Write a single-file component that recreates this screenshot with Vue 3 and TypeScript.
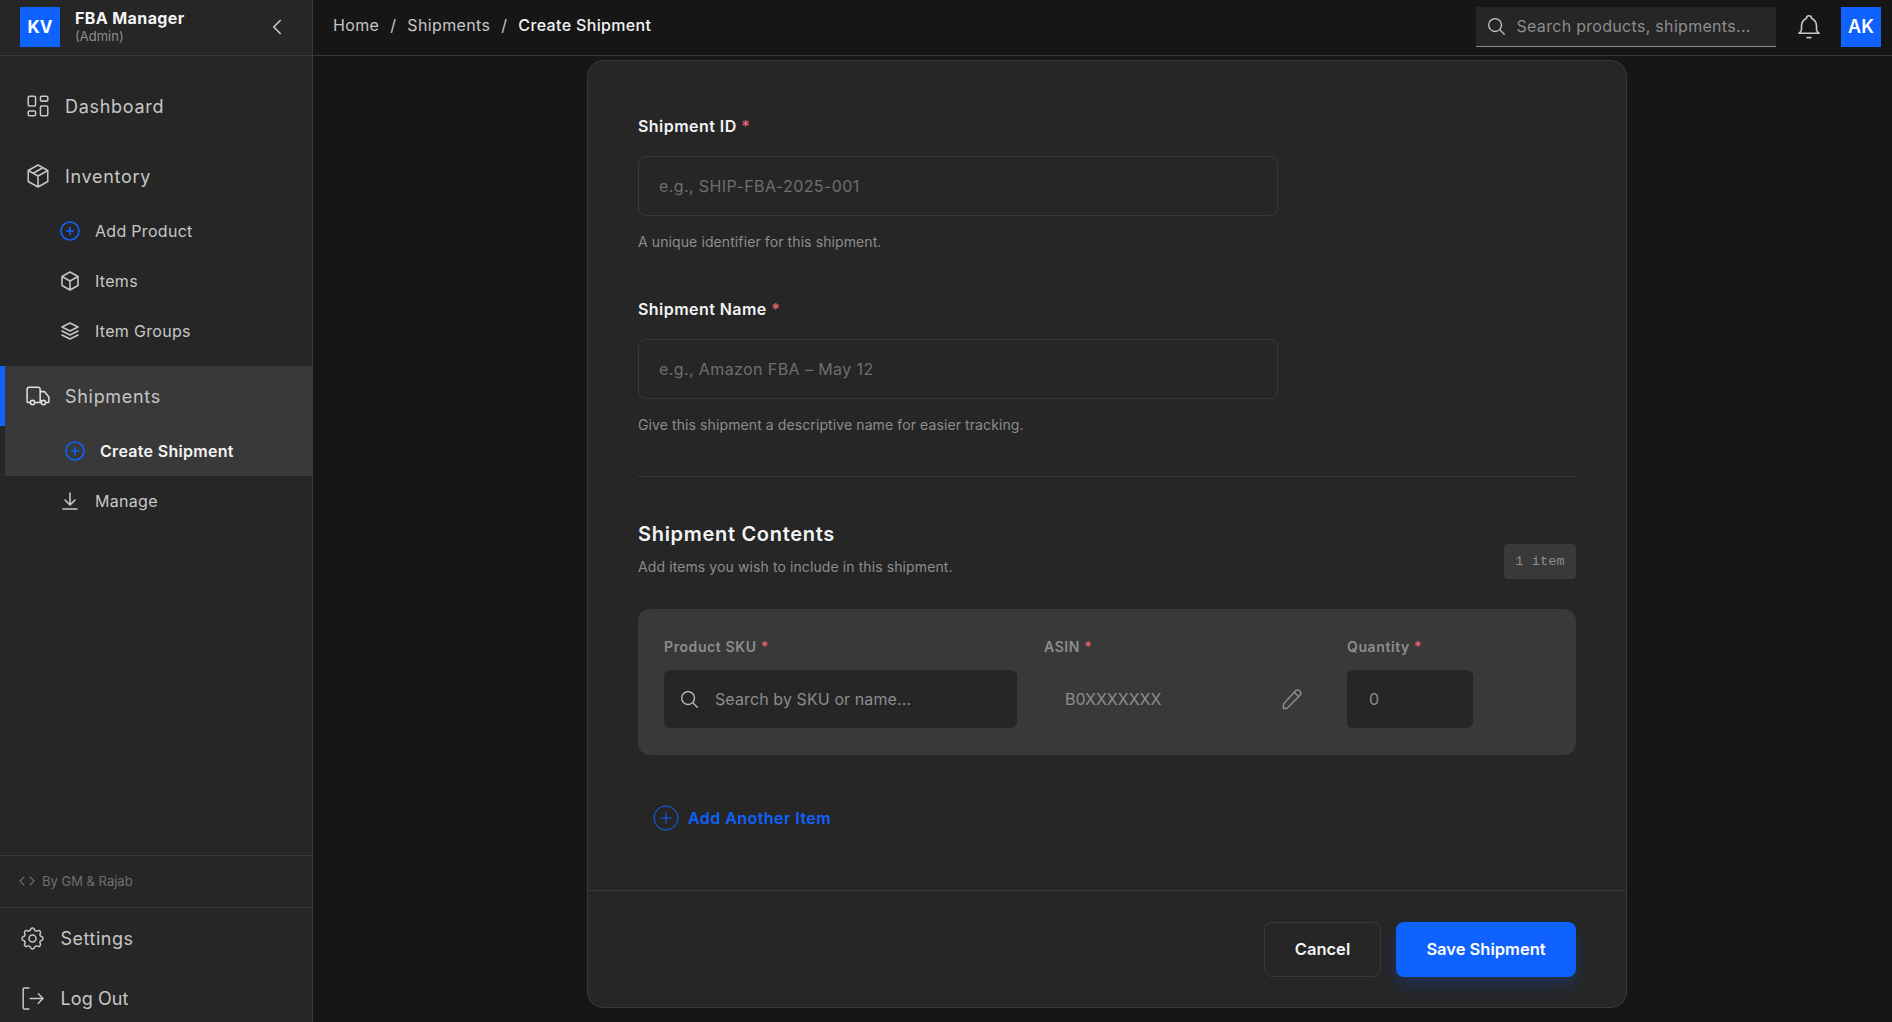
<script setup lang="ts">
const icons: Record<string, string> = {
  dash: 'M5 4h4a1 1 0 0 1 1 1v6a1 1 0 0 1-1 1H5a1 1 0 0 1-1-1V5a1 1 0 0 1 1-1zM5 16h4a1 1 0 0 1 1 1v2a1 1 0 0 1-1 1H5a1 1 0 0 1-1-1v-2a1 1 0 0 1 1-1zM15 12h4a1 1 0 0 1 1 1v6a1 1 0 0 1-1 1h-4a1 1 0 0 1-1-1v-6a1 1 0 0 1 1-1zM15 4h4a1 1 0 0 1 1 1v2a1 1 0 0 1-1 1h-4a1 1 0 0 1-1-1V5a1 1 0 0 1 1-1z',
  pkg: 'M12 3l8 4.5v9L12 21l-8-4.5v-9zM12 12l8-4.5M12 12v9M12 12L4 7.5M16 5.25l-8 4.5',
  box: 'M12 3l8 4.5v9L12 21l-8-4.5v-9zM12 12l8-4.5M12 12v9M12 12L4 7.5',
  plus: 'M12 3a9 9 0 1 0 0 18a9 9 0 0 0 0-18zM8.5 12h7M12 8.5v7',
  stack: 'M12 4L4 8l8 4l8-4zM4 12l8 4l8-4M4 16l8 4l8-4',
  truck: 'M14 18V6a2 2 0 0 0-2-2H4a2 2 0 0 0-2 2v11a1 1 0 0 0 1 1h2M15 18H9M19 18h2a1 1 0 0 0 1-1v-3.65a1 1 0 0 0-.22-.624l-3.48-4.35A1 1 0 0 0 17.52 8H14M19 18a2 2 0 1 1-4 0a2 2 0 0 1 4 0zM9 18a2 2 0 1 1-4 0a2 2 0 0 1 4 0z',
  down: 'M12 4v12M7 11l5 5l5-5M5 20h14',
  code: 'M8 7l-5 5l5 5M16 7l5 5l-5 5',
  gear: 'M10.325 4.317c.426-1.756 2.924-1.756 3.35 0a1.724 1.724 0 0 0 2.573 1.066c1.543-.94 3.31.826 2.37 2.37a1.724 1.724 0 0 0 1.065 2.572c1.756.426 1.756 2.924 0 3.35a1.724 1.724 0 0 0-1.066 2.573c.94 1.543-.826 3.31-2.37 2.37a1.724 1.724 0 0 0-2.572 1.065c-.426 1.756-2.924 1.756-3.35 0a1.724 1.724 0 0 0-2.573-1.066c-1.543.94-3.31-.826-2.37-2.37a1.724 1.724 0 0 0-1.065-2.572c-1.756-.426-1.756-2.924 0-3.35a1.724 1.724 0 0 0 1.066-2.573c-.94-1.543.826-3.31 2.37-2.37c1 .608 2.296.07 2.572-1.065zM15 12a3 3 0 1 1-6 0a3 3 0 0 1 6 0z',
  logout: 'M9 3H5a1 1 0 0 0-1 1v16a1 1 0 0 0 1 1h4M10 12h11M17 8l4 4l-4 4',
  search: 'M11 4a7 7 0 1 0 0 14a7 7 0 0 0 0-14zM21 21l-5-5',
  bell: 'M10 5a2 2 0 1 1 4 0a7 7 0 0 1 4 6v3a4 4 0 0 0 2 3H4a4 4 0 0 0 2-3v-3a7 7 0 0 1 4-6M10.5 20.5h3',
  pencil: 'M4 20h3L18.5 8.5a2.5 2.5 0 0 0-4-4L4 16zM13.5 5.5l4 4',
  chevron: 'M15 6l-6 6l6 6'
}
</script>

<template>
  <div class="app">
    <aside class="sidebar">
      <div class="brand">
        <div class="logo">KV</div>
        <div class="brand-text">
          <div class="brand-name">FBA Manager</div>
          <div class="brand-role">(Admin)</div>
        </div>
        <svg class="chev" viewBox="0 0 24 24"><path :d="icons.chevron" /></svg>
      </div>

      <nav class="nav">
        <a class="item"><svg class="ic" viewBox="3 3 18 18"><path :d="icons.dash" /></svg>Dashboard</a>
        <a class="item"><svg class="ic" viewBox="3 3 18 18"><path :d="icons.pkg" /></svg>Inventory</a>
        <a class="sub"><svg class="ic-s blue" viewBox="2 2 20 20"><path :d="icons.plus" /></svg>Add Product</a>
        <a class="sub"><svg class="ic-s" viewBox="2 2 20 20"><path :d="icons.box" /></svg>Items</a>
        <a class="sub"><svg class="ic-s" viewBox="2 2 20 20"><path :d="icons.stack" /></svg>Item Groups</a>
        <a class="item active"><svg class="ic truck" viewBox="1 1 22 22"><path :d="icons.truck" /></svg>Shipments</a>
        <a class="sub current"><svg class="ic-s blue" viewBox="2 2 20 20"><path :d="icons.plus" /></svg>Create Shipment</a>
        <a class="sub"><svg class="ic-s" viewBox="2 2 20 20"><path :d="icons.down" /></svg>Manage</a>
      </nav>

      <div class="credit"><svg class="ic-c" viewBox="3 3 18 18"><path :d="icons.code" /></svg>By GM &amp; Rajab</div>
      <div class="bottom">
        <a class="foot"><svg class="ic-f" viewBox="3 3 18 18"><path :d="icons.gear" /></svg>Settings</a>
        <a class="foot tight"><svg class="ic-f" viewBox="3 3 18 18"><path :d="icons.logout" /></svg>Log Out</a>
      </div>
    </aside>

    <div class="main">
      <header class="topbar">
        <div class="crumbs">
          <span>Home</span><i>/</i><span>Shipments</span><i>/</i><b>Create Shipment</b>
        </div>
        <div class="tools">
          <label class="top-search">
            <svg class="ic-t" viewBox="0 0 24 24"><path :d="icons.search" /></svg>
            <input placeholder="Search products, shipments..." />
          </label>
          <svg class="bell" viewBox="0 0 24 24"><path :d="icons.bell" /></svg>
          <div class="avatar">AK</div>
        </div>
      </header>

      <main class="content">
        <section class="card">
          <div class="body">
            <div class="group">
              <label class="label">Shipment ID <em>*</em></label>
              <input class="field" placeholder="e.g., SHIP-FBA-2025-001" />
              <p class="hint">A unique identifier for this shipment.</p>
            </div>
            <div class="group">
              <label class="label">Shipment Name <em>*</em></label>
              <input class="field" placeholder="e.g., Amazon FBA – May 12" />
              <p class="hint">Give this shipment a descriptive name for easier tracking.</p>
            </div>

            <hr class="rule" />

            <div class="contents-head">
              <div>
                <h2>Shipment Contents</h2>
                <p class="sub-title">Add items you wish to include in this shipment.</p>
              </div>
              <span class="badge">1 item</span>
            </div>

            <div class="panel">
              <div class="col">
                <label class="mini">Product SKU <em>*</em></label>
                <label class="dark sku">
                  <svg class="ic-t" viewBox="0 0 24 24"><path :d="icons.search" /></svg>
                  <input placeholder="Search by SKU or name..." />
                </label>
              </div>
              <div class="col">
                <label class="mini">ASIN <em>*</em></label>
                <div class="asin">
                  <span>B0XXXXXXX</span>
                  <svg class="pencil" viewBox="0 0 24 24"><path :d="icons.pencil" /></svg>
                </div>
              </div>
              <div class="col">
                <label class="mini">Quantity <em>*</em></label>
                <label class="dark qty"><input placeholder="0" /></label>
              </div>
            </div>

            <button class="add">
              <svg class="add-ic" viewBox="0 0 26 26"><circle cx="13" cy="13" r="12" /><path d="M8 13h10M13 8v10" /></svg>
              Add Another Item
            </button>
          </div>

          <footer class="actions">
            <button class="btn ghost">Cancel</button>
            <button class="btn primary">Save Shipment</button>
          </footer>
        </section>
      </main>
    </div>
  </div>
</template>

<style>
html, body { margin: 0; background: #161616; overflow: hidden; }
</style>

<style scoped>
* { box-sizing: border-box; }
.app {
  display: flex; height: 1022px; overflow: hidden; background: #161616; color: #f4f4f4;
  font-family: Inter, "Noto Sans", sans-serif;
}
svg { fill: none; stroke: currentColor; stroke-width: 1.6; stroke-linecap: round; stroke-linejoin: round; flex: none; overflow: visible; }
.sidebar {
  width: 313px; height: 1028px; flex: none; display: flex; flex-direction: column;
  background: #262626; border-right: 1px solid #393939;
}
.brand { height: 56px; flex: none; display: flex; align-items: center; padding: 0 20px 2px; border-bottom: 1px solid #393939; }
.logo { width: 40px; height: 40px; background: #0f62fe; color: #fff; font-weight: 700; font-size: 17px; display: flex; align-items: center; justify-content: center; }
.brand-text { margin-left: 15px; flex: 1; }
.brand-name { font-size: 16px; font-weight: 700; line-height: 20px; letter-spacing: .4px; margin-top: -2px; color: #f4f4f4; }
.brand-role { font-size: 13px; line-height: 16px; color: #8d8d8d; }
.chev { width: 26px; height: 26px; color: #c6c6c6; margin-right: 2px; }
.nav { flex: 1; padding-top: 20px; display: flex; flex-direction: column; }
.item { height: 60px; flex: none; display: flex; align-items: center; gap: 16.5px; padding-left: 26.5px; font-size: 18px; letter-spacing: .7px; color: #c6c6c6; }
.item + .item, .sub + .item { margin-top: 10px; }
.ic { width: 22px; height: 22px; stroke-width: 1.25; }
.truck { width: 24px; height: 24px; margin-left: -1px; margin-right: -1px; stroke-width: 1.4; color: #e0e0e0; }
.ic-s { width: 20px; height: 20px; }
.blue { color: #0f62fe; }
.sub { height: 50px; flex: none; display: flex; align-items: center; gap: 15px; padding-left: 60px; font-size: 16px; letter-spacing: .3px; color: #c6c6c6; }
.active { background: #393939; border-left: 5px solid #0f62fe; padding-left: 21.5px; }
.current { background: #393939; margin-left: 5px; color: #f4f4f4; font-weight: 600; }
.credit { height: 53px; flex: none; display: flex; align-items: center; gap: 8px; padding: 0 0 1px 20px; font-size: 13px; color: #6f6f6f; border-top: 1px solid #393939; border-bottom: 1px solid #393939; }
.ic-c { width: 14px; height: 14px; }
.bottom { flex: none; }
.foot { height: 60px; display: flex; align-items: center; gap: 17.5px; padding-left: 22px; font-size: 18px; letter-spacing: .5px; color: #c6c6c6; }
.tight { letter-spacing: .1px; }
.ic-f { width: 21px; height: 21px; stroke-width: 1.3; }

.main { flex: 1; min-width: 0; display: flex; flex-direction: column; }
.topbar { height: 56px; flex: none; display: flex; align-items: center; justify-content: space-between; padding: 0 11px 2px 20px; border-bottom: 1px solid #393939; }
.crumbs { display: flex; align-items: center; font-size: 16px; letter-spacing: .35px; color: #c6c6c6; margin-bottom: 3px; }
.crumbs i { font-style: normal; margin: 0 11px; }
.crumbs b { font-weight: 500; color: #f4f4f4; }
.tools { display: flex; align-items: center; }
.top-search { width: 300px; height: 40px; display: flex; align-items: center; gap: 8px; padding-left: 8.5px; background: #262626; border-bottom: 1px solid #8d8d8d; }
.ic-t { width: 22px; height: 22px; color: #c6c6c6; stroke-width: 1.4; }
input { background: transparent; border: 0; outline: 0; min-width: 0; flex: 1; font: inherit; font-size: 16px; letter-spacing: .3px; color: #f4f4f4; }
input::placeholder { color: #8d8d8d; opacity: 1; }
.bell { width: 30px; height: 30px; color: #c6c6c6; margin: 0 17px 0 18px; stroke-width: 1.3; }
.avatar { width: 40px; height: 40px; background: #0f62fe; color: #fff; font-weight: 600; font-size: 18px; display: flex; align-items: center; justify-content: center; }

.content { flex: 1; padding: 4px 0 0 274px; }
.card { width: 1040px; height: 948px; background: #262626; border: 1px solid #393939; border-radius: 16px; display: flex; flex-direction: column; }
.body { flex: 1; padding: 53px 50px 0; }
.group { height: 138px; }
.group + .group { margin-top: 45px; }
.label { display: block; height: 24px; line-height: 24px; margin-bottom: 18px; font-size: 16px; font-weight: 600; letter-spacing: .45px; color: #f4f4f4; }
em { font-style: normal; color: #e5636f; }
.field { display: block; width: 640px; height: 60px; padding: 0 20px; background: #262626; border: 1px solid #393939; border-radius: 8px; letter-spacing: .4px; }
.field::placeholder { color: #6f6f6f; }
.hint { margin: 16px 0 0; font-size: 14px; line-height: 20px; letter-spacing: .1px; color: #8d8d8d; }
.rule { border: 0; border-top: 1px solid #393939; margin: 41px 0 0; }
.contents-head { display: flex; justify-content: space-between; align-items: flex-end; margin-top: 43px; }
h2 { margin: 0; font-size: 20px; font-weight: 600; line-height: 28px; letter-spacing: .7px; color: #f4f4f4; }
.sub-title { margin: 9px 0 2px; font-size: 14px; line-height: 20px; letter-spacing: .1px; color: #8d8d8d; }
.badge { width: 72px; height: 35px; display: flex; align-items: center; justify-content: center; background: #393939; border-radius: 4px; font-family: "Liberation Mono", monospace; font-size: 13.7px; color: #8d8d8d; }
.panel { margin-top: 30px; height: 146px; padding: 28px 26px 0; background: #393939; border-radius: 12px; display: grid; grid-template-columns: 353px 276px 126px; column-gap: 27px; }
.mini { display: block; height: 20px; line-height: 20px; margin-bottom: 13px; font-size: 14px; font-weight: 600; letter-spacing: .6px; color: #8d8d8d; }
.dark { height: 58px; display: flex; align-items: center; background: #262626; border-radius: 6px; }
.sku { gap: 13px; padding-left: 14px; }
.sku input { letter-spacing: .1px; }
.qty { padding-left: 20px; }
.asin { height: 58px; display: flex; align-items: center; justify-content: space-between; padding: 0 14.5px 0 21px; font-size: 16px; color: #8d8d8d; }
.pencil { width: 27px; height: 27px; color: #8d8d8d; stroke-width: 1.3; }
.add { margin: 50px 0 0 15px; padding: 0; display: flex; align-items: center; gap: 9px; background: none; border: 0; font: inherit; font-size: 16px; font-weight: 600; letter-spacing: .45px; color: #0f62fe; }
.add-ic { width: 26px; height: 26px; stroke-width: 1; }
.actions { height: 117px; flex: none; display: flex; justify-content: flex-end; align-items: center; gap: 15px; padding: 0 50px 0 0; border-top: 1px solid #393939; }
.btn { height: 55px; border-radius: 8px; font: inherit; font-size: 16.5px; font-weight: 600; color: #f4f4f4; }
.ghost { width: 117px; background: transparent; border: 1px solid #393939; }
.primary { width: 180px; background: #0f62fe; border: 0; color: #fff; box-shadow: 0 8px 16px rgba(15, 98, 254, 0.2); }
</style>
